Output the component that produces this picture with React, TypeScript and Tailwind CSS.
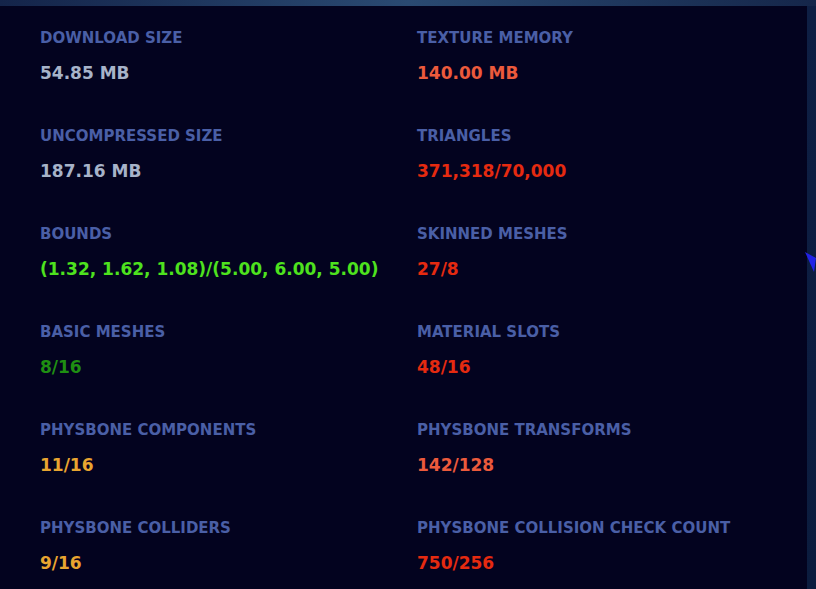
const stats = [
  { label: 'Download Size', value: '54.85 MB', color: 'text-[#a7b3c9]' },
  { label: 'Texture Memory', value: '140.00 MB', color: 'text-[#ec5a3c]' },
  { label: 'Uncompressed Size', value: '187.16 MB', color: 'text-[#a7b3c9]' },
  { label: 'Triangles', value: '371,318/70,000', color: 'text-[#e52a10]' },
  { label: 'Bounds', value: '(1.32, 1.62, 1.08)/(5.00, 6.00, 5.00)', color: 'text-[#4ee21e]' },
  { label: 'Skinned Meshes', value: '27/8', color: 'text-[#e52a10]' },
  { label: 'Basic Meshes', value: '8/16', color: 'text-[#1f8f12]' },
  { label: 'Material Slots', value: '48/16', color: 'text-[#e52a10]' },
  { label: 'PhysBone Components', value: '11/16', color: 'text-[#e8a530]' },
  { label: 'PhysBone Transforms', value: '142/128', color: 'text-[#ec5a3c]' },
  { label: 'PhysBone Colliders', value: '9/16', color: 'text-[#e8a530]' },
  { label: 'PhysBone Collision Check Count', value: '750/256', color: 'text-[#e52a10]' },
];

export default function App() {
  return (
    <div className="flex h-[589px] w-[816px] flex-col overflow-hidden bg-[#0b1a3a] font-['DejaVu_Sans',sans-serif]">
      <div className="h-[6px] bg-gradient-to-r from-[#14244a] via-[#2a4a72] to-[#15264a]" />
      <div className="flex flex-1">
        <div className="flex-1 bg-[#03031f] pl-[40px] pt-[22px]">
          <div className="grid grid-cols-[377px_1fr] gap-y-[42px]">
            {stats.map((s) => (
              <div key={s.label}>
                <div className="text-[15px] font-bold uppercase leading-[20px] text-[#4a5fa6]">
                  {s.label}
                </div>
                <div className={`mt-[14px] text-[17px] font-bold leading-[22px] ${s.color}`}>
                  {s.value}
                </div>
              </div>
            ))}
          </div>
        </div>
        <div className="relative w-[9px] bg-gradient-to-b from-[#0e1f44] to-[#0b1c3e]">
          <svg className="absolute left-[-2px] top-[246px]" width="11" height="20" viewBox="0 0 11 20">
            <polygon points="0,0 11,6 9,20" fill="#2222e6" />
          </svg>
        </div>
      </div>
    </div>
  );
}
